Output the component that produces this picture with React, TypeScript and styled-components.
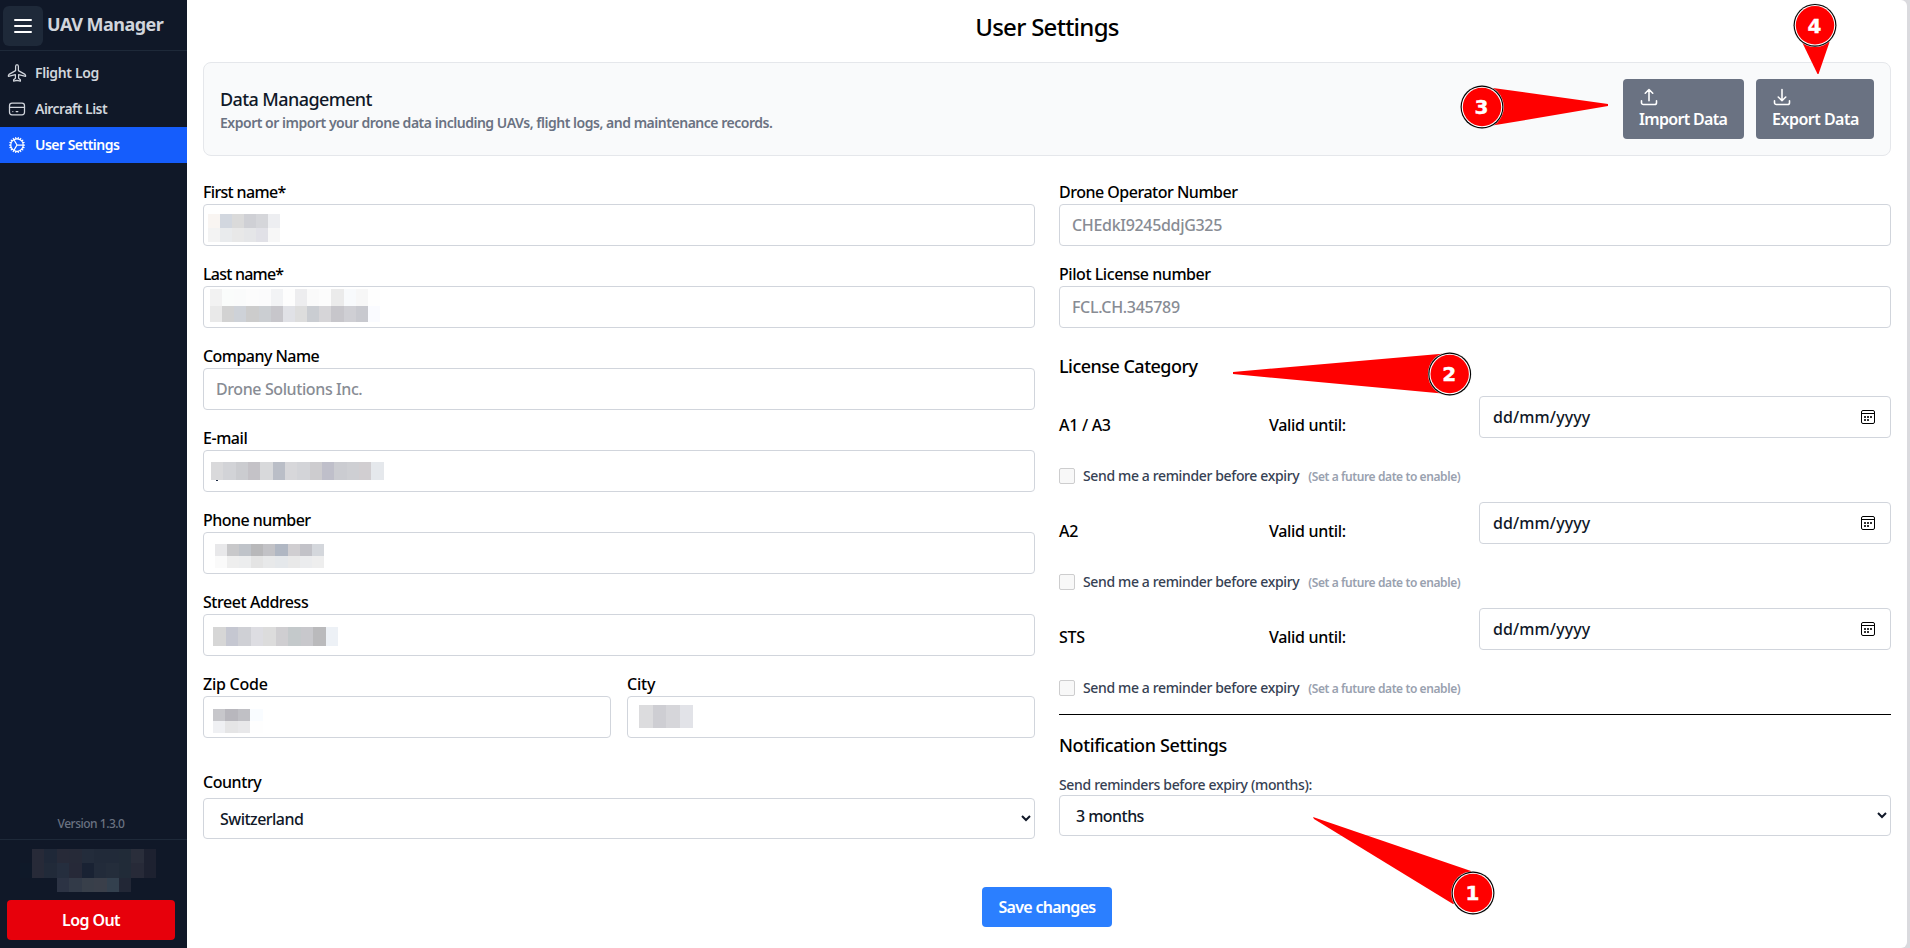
import React from "react";
import styled, { createGlobalStyle, css } from "styled-components";
import { TbCreditCard } from "react-icons/tb";
import { HiOutlineArrowDownTray, HiOutlineArrowUpTray, HiOutlineCog } from "react-icons/hi2";

const GlobalStyle = createGlobalStyle`
  *, *::before, *::after { box-sizing: border-box; }
  body {
    margin: 0;
    background: #fff;
    color: #000;
    font: 500 16px/24px "Noto Sans", "Open Sans", sans-serif;
  }
  h1, h2, p { margin: 0; font-weight: 500; }
  input, select, button { font: inherit; color: inherit; margin: 0; }
`;

type Tracked = { $track?: number };
const tracking = css<Tracked>`
  letter-spacing: ${({ $track = -0.028 }) => $track}em;
`;

const Page = styled.div`
  position: relative;
  display: flex;
  height: 948px;
  overflow: hidden;
  background: #dadade;
`;

const Sidebar = styled.aside`
  display: flex;
  flex-direction: column;
  flex: none;
  width: 187px;
  background: #101828;
  color: #d1d5dc;
`;

const Brand = styled.div`
  display: flex;
  align-items: center;
  gap: 4px;
  height: 51px;
  padding: 1px 3px 0;
  border-bottom: 1px solid #1e2939;
`;

const MenuButton = styled.button`
  display: grid;
  place-items: center;
  width: 40px;
  height: 40px;
  padding: 0;
  border: 0;
  border-radius: 6px;
  background: #1e2939;
  color: #fff;
`;

const BrandName = styled.span<Tracked>`
  font-size: 18px;
  font-weight: 700;
  line-height: 26px;
  padding-bottom: 4px;
  white-space: nowrap;
  ${tracking}
`;

const Nav = styled.nav`
  display: flex;
  flex-direction: column;
  padding-top: 4px;
`;

const NavItem = styled.a<Tracked & { $active?: boolean }>`
  display: flex;
  align-items: center;
  gap: 8px;
  height: 36px;
  padding: 0 7px;
  font-size: 14px;
  font-weight: 600;
  line-height: 20px;
  color: ${({ $active }) => ($active ? "#fff" : "#d1d5dc")};
  background: ${({ $active }) => ($active ? "#155dfc" : "transparent")};
  ${tracking}
`;

const SidebarFooter = styled.div`
  margin-top: auto;
`;

const Version = styled.div<Tracked>`
  width: 182px;
  padding-bottom: 7px;
  font-size: 12px;
  line-height: 16px;
  text-align: center;
  color: #6a7282;
  ${tracking}
`;

const Account = styled.div`
  display: flex;
  flex-direction: column;
  height: 109px;
  padding: 9px 12px 8px 7px;
  border-top: 1px solid #1e2939;
`;

const AccountName = styled.div`
  height: 51px;
`;

const LogOut = styled.button<Tracked>`
  height: 40px;
  border: 0;
  border-radius: 4px;
  background: #e7000b;
  color: #fff;
  font-weight: 600;
  ${tracking}
`;

const Main = styled.main`
  flex: 1;
  margin-right: 3px;
  padding: 11px 16px 0;
  background: #fff;
  border-radius: 0 6px 6px 0;
`;

const PageTitle = styled.h1<Tracked>`
  margin-bottom: 19px;
  font-size: 24px;
  line-height: 32px;
  text-align: center;
  ${tracking}
`;

const DataCard = styled.section`
  display: flex;
  align-items: center;
  justify-content: space-between;
  height: 94px;
  padding: 16px;
  border: 1px solid #e5e7eb;
  border-radius: 8px;
  background: #f9fafb;
`;

const Heading = styled.h2<Tracked & { $ink?: string }>`
  font-size: 18px;
  line-height: 28px;
  color: ${({ $ink = "#000" }) => $ink};
  ${tracking}
`;

const Description = styled.p<Tracked>`
  font-size: 14px;
  font-weight: 600;
  line-height: 20px;
  color: #6a7282;
  ${tracking}
`;

const Actions = styled.div`
  display: flex;
  gap: 12px;
`;

const DataButton = styled.button<Tracked & { $width: number }>`
  display: flex;
  flex-direction: column;
  align-items: flex-start;
  width: ${({ $width }) => $width}px;
  height: 60px;
  padding: 8px 16px;
  border: 0;
  border-radius: 4px;
  background: #6a7282;
  color: #fff;
  font-weight: 600;
  line-height: 24px;
  white-space: nowrap;
  ${tracking}
`;

const Columns = styled.div`
  display: grid;
  grid-template-columns: 1fr 1fr;
  gap: 24px;
  margin-top: 24px;
`;

const Column = styled.div`
  display: flex;
  flex-direction: column;
  gap: 16px;
`;

const Pair = styled.div`
  display: grid;
  grid-template-columns: 1fr 1fr;
  gap: 16px;
`;

const Field = styled.div<{ $top?: number }>`
  display: flex;
  flex-direction: column;
  padding-top: ${({ $top = 0 }) => $top}px;
`;

const Label = styled.label<Tracked & { $below?: number }>`
  margin-bottom: ${({ $below = 0 }) => $below}px;
  ${tracking}
`;

const control = css`
  width: 100%;
  border: 1px solid #d1d5dc;
  border-radius: 4px;
  background: #fff;
  color: #101828;
`;

const TextInput = styled.input<Tracked>`
  ${control}
  height: 42px;
  padding: 0 12px;
  outline: 0;
  ${tracking}
  &::placeholder { color: #888c94; opacity: 1; }
`;

const MaskedInput = styled.div`
  ${control}
  height: 42px;
  overflow: hidden;
`;

const Select = styled.select<Tracked>`
  ${control}
  height: 41px;
  padding: 0 0 0 12px;
  ${tracking}
`;

const MosaicBox = styled.div<{ $x: number; $y: number }>`
  padding: ${({ $y }) => $y}px 0 0 ${({ $x }) => $x}px;
`;

const MosaicRow = styled.div<{ $h: number; $indent?: number }>`
  display: flex;
  height: ${({ $h }) => $h}px;
  margin-left: ${({ $indent = 0 }) => $indent}px;
`;

const Cell = styled.span<{ $w: number; $tone: string }>`
  flex: none;
  width: ${({ $w }) => $w}px;
  background: ${({ $tone }) => $tone};
`;

const SectionTop = styled.div`
  padding-top: 8px;
`;

const LicenseGrid = styled.div`
  display: grid;
  grid-template-columns: repeat(4, 1fr);
  column-gap: 8px;
`;

const LicenseLabel = styled.span<Tracked>`
  padding-top: 17px;
  ${tracking}
`;

const DateField = styled.div<Tracked>`
  ${control}
  grid-column: span 2;
  display: flex;
  align-items: center;
  justify-content: space-between;
  height: 42px;
  padding: 0 15px 0 13px;
  ${tracking}
`;

const Reminder = styled.label<Tracked>`
  display: flex;
  align-items: center;
  height: 20px;
  margin-top: 28px;
  font-size: 14px;
  line-height: 20px;
  color: #364153;
  ${tracking}
`;

const Checkbox = styled.span`
  width: 16px;
  height: 16px;
  margin-right: 8px;
  border: 1px solid #cdcdce;
  border-radius: 2px;
  background: #f8f8f8;
`;

const Hint = styled.span<Tracked>`
  margin-left: 9px;
  padding-top: 1px;
  font-size: 12px;
  font-weight: 600;
  line-height: 16px;
  color: #99a1af;
  ${tracking}
`;

const Divider = styled.hr`
  width: 100%;
  height: 1px;
  margin: 0;
  border: 0;
  background: #000;
`;

const SmallLabel = styled.label<Tracked>`
  font-size: 14px;
  line-height: 20px;
  color: #364153;
  ${tracking}
`;

const SaveRow = styled.div`
  display: flex;
  justify-content: center;
  margin-top: 48px;
`;

const SaveButton = styled.button<Tracked>`
  width: 130px;
  height: 40px;
  padding: 0;
  border: 0;
  border-radius: 4px;
  background: #2b7fff;
  color: #fff;
  font-weight: 600;
  ${tracking}
`;

const CalloutLayer = styled.svg`
  position: absolute;
  inset: 0;
  pointer-events: none;
  text {
    font: 700 20px "DejaVu Sans", sans-serif;
    fill: #fff;
    stroke: #fff;
    stroke-width: 0.4px;
    text-anchor: middle;
  }
`;

type MosaicProps = {
  x: number;
  y: number;
  w: number;
  rows: { h: number; indent?: number; tones: string }[];
};

function Mosaic({ x, y, w, rows }: MosaicProps) {
  return (
    <MosaicBox $x={x} $y={y}>
      {rows.map((row, i) => (
        <MosaicRow key={i} $h={row.h} $indent={row.indent}>
          {row.tones.split(" ").map((tone, j) => (
            <Cell key={j} $w={w} $tone={`#${tone}`} />
          ))}
        </MosaicRow>
      ))}
    </MosaicBox>
  );
}

const MenuIcon = () => (
  <svg width="18" height="16" viewBox="0 0 18 16" stroke="currentColor" strokeWidth="2" strokeLinecap="round">
    <path d="M1 2h16M1 8h16M1 14h16" />
  </svg>
);

const PlaneIcon = () => (
  <svg width="20" height="20" viewBox="0 0 20 20" fill="none" stroke="currentColor" strokeWidth="1.25" strokeLinejoin="round">
    <path d="M10 1.6c-.9 0-1.4.9-1.4 2v4L2 11.4c-.4.3-.6.6-.6 1v.9l7-1.7v3.6l-1.8 1.5v1.4l3.4-.7 3.4.7v-1.4l-1.8-1.5v-3.6l7 1.7v-.9c0-.4-.2-.7-.6-1l-6.6-3.8v-4c0-1.1-.5-2-1.4-2z" />
  </svg>
);

const CalendarIcon = () => (
  <svg width="14" height="14" viewBox="0 0 14 14" fill="none" stroke="#000">
    <rect x=".5" y=".5" width="13" height="13" rx="1.5" />
    <path d="M1 3.5h12" />
    <path d="M3 7h2M6 7h2M9 7h2M3 10h2M6 10h2" strokeWidth="2" stroke="#333" />
  </svg>
);

const licenses = ["A1 / A3", "A2", "STS"];

const callouts = [
  { n: 1, x: 1473, y: 893, wedge: "1313,817 1314,819 1453,904 1473,893 1471,871" },
  { n: 2, x: 1449.7, y: 374, wedge: "1233,372 1233,374 1442,393.5 1450,374 1442,353.8" },
  { n: 3, x: 1482, y: 107, wedge: "1608,104 1608,106 1494,125.3 1482,107 1493,88" },
  { n: 4, x: 1815, y: 25.3, wedge: "1817.5,74 1818.5,74 1829.5,42 1815,25 1802,42" },
];

export default function App() {
  return (
    <Page>
      <GlobalStyle />
      <Sidebar>
        <Brand>
          <MenuButton aria-label="Menu"><MenuIcon /></MenuButton>
          <BrandName $track={-0.028}>UAV Manager</BrandName>
        </Brand>
        <Nav>
          <NavItem $track={-0.026}><PlaneIcon />Flight Log</NavItem>
          <NavItem $track={-0.037}><TbCreditCard size={20} strokeWidth={1.5} />Aircraft List</NavItem>
          <NavItem $track={-0.037} $active><HiOutlineCog size={20} />User Settings</NavItem>
        </Nav>
        <SidebarFooter>
          <Version $track={-0.041}>Version 1.3.0</Version>
          <Account>
            <AccountName>
              <Mosaic
                x={13}
                y={0}
                w={12.4}
                rows={[
                  { h: 14, indent: 12, tones: "272a38 1f2838 272a38 262a38 232c3b 212a39 212a39 212b38 2a2e3b 1d2130" },
                  { h: 15, indent: -0.4, tones: "0f1929 272a38 212a39 252e3e 262938 192233 222b3a 242d3b 212b38 272a38 1d2130" },
                  { h: 14, indent: 37, tones: "2c3344 323a48 383f4a 3a3f4a 33404e 222736" },
                ]}
              />
            </AccountName>
            <LogOut $track={-0.037}>Log Out</LogOut>
          </Account>
        </SidebarFooter>
      </Sidebar>

      <Main>
        <PageTitle $track={-0.03}>User Settings</PageTitle>
        <DataCard>
          <div>
            <Heading $track={-0.033} $ink="#101828">Data Management</Heading>
            <Description $track={-0.034}>
              Export or import your drone data including UAVs, flight logs, and maintenance records.
            </Description>
          </div>
          <Actions>
            <DataButton $width={121} $track={-0.042}>
              <HiOutlineArrowUpTray size={20} strokeWidth={1.9} />Import Data
            </DataButton>
            <DataButton $width={118} $track={-0.031}>
              <HiOutlineArrowDownTray size={20} strokeWidth={1.9} />Export Data
            </DataButton>
          </Actions>
        </DataCard>

        <Columns>
          <Column>
            <Field>
              <Label $track={-0.042}>First name*</Label>
              <MaskedInput>
                <Mosaic x={4} y={9} w={12} rows={[
                  { h: 14, tones: "f9f5f2 d2d7df dadada cfd0d5 d5d6da edeef1" },
                  { h: 14, tones: "f3f3f3 e9ebed e8e8e8 e5e6e8 e1e1e7 f7f7f7" },
                ]} />
              </MaskedInput>
            </Field>
            <Field>
              <Label $track={-0.048}>Last name*</Label>
              <MaskedInput>
                <Mosaic x={6} y={2} w={12.15} rows={[
                  { h: 17, tones: "f2f2f2 fafcfb fafbfb fcfcfc fbfbfc f2f3f5 fdfdfd ededef fafafa fcfcfc ebebeb f8fafc f7f7f7 fefefe" },
                  { h: 16, tones: "e9e9e9 d2d2d2 ced2d8 cccccc cbced2 c7c6cb e0e1e6 dddddd cacdd2 d6d5d8 c7c6cb cfcfd4 c8c9cf fafbff" },
                ]} />
              </MaskedInput>
            </Field>
            <Field>
              <Label $track={-0.034}>Company Name</Label>
              <TextInput $track={-0.025} placeholder="Drone Solutions Inc." />
            </Field>
            <Field>
              <Label>E-mail</Label>
              <MaskedInput>
                <Mosaic x={7} y={11} w={12.35} rows={[
                  { h: 18, tones: "d9d9db d2d3d7 cbccd0 c4c2c7 d8d9db babec7 d7d7da d3d4d8 cdcccf bfbfca cbccd1 cecfd3 d1ced1 e5e8ec" },
                ]} />
                <Mosaic x={12} y={0} w={2} rows={[{ h: 1, tones: "1d2b45" }]} />
              </MaskedInput>
            </Field>
            <Field>
              <Label $track={-0.034}>Phone number</Label>
              <MaskedInput>
                <Mosaic x={11} y={11} w={12.1} rows={[
                  { h: 12, tones: "e8e8ea c8c8ca bfc3c9 b8b8ba c2c2c6 b0b7c3 d0ced1 c2c2c8 d4d7dc" },
                  { h: 12, tones: "fafafa eeeeee ecedee e4e4e4 e8e9ea e5e8eb e9e9e9 ebecee eeeeee" },
                ]} />
              </MaskedInput>
            </Field>
            <Field>
              <Label>Street Address</Label>
              <MaskedInput>
                <Mosaic x={9} y={12} w={12.5} rows={[
                  { h: 19, tones: "d6d6d6 c5c7d1 cfd0d5 dddde2 dcdcdc cfced1 c4c9cb c8c8cc bababc edf1f6" },
                ]} />
              </MaskedInput>
            </Field>
            <Pair>
              <Field>
                <Label $track={-0.016}>Zip Code</Label>
                <MaskedInput>
                  <Mosaic x={9} y={12} w={12.4} rows={[
                    { h: 12, tones: "c7c7cb b8b7bd c0c0c5 f9fcff" },
                    { h: 12, tones: "eff0f3 e5e5e6 e8e8ea fefefe" },
                  ]} />
                </MaskedInput>
              </Field>
              <Field>
                <Label $track={-0.015}>City</Label>
                <MaskedInput>
                  <Mosaic x={11} y={8} w={13.5} rows={[{ h: 23, tones: "dcdcde ceced3 d6d6da e2e3e8" }]} />
                </MaskedInput>
              </Field>
            </Pair>
            <Field $top={16}>
              <Label $below={4}>Country</Label>
              <Select $track={-0.033}><option>Switzerland</option></Select>
            </Field>
          </Column>

          <Column>
            <Field>
              <Label $track={-0.031}>Drone Operator Number</Label>
              <TextInput $track={-0.02} placeholder="CHEdkI9245ddjG325" />
            </Field>
            <Field>
              <Label>Pilot License number</Label>
              <TextInput $track={-0.021} placeholder="FCL.CH.345789" />
            </Field>
            <SectionTop>
              <Heading $track={-0.0293}>License Category</Heading>
            </SectionTop>
            {licenses.map((name) => (
              <div key={name}>
                <LicenseGrid>
                  <LicenseLabel $track={-0.018}>{name}</LicenseLabel>
                  <LicenseLabel $track={-0.02}>Valid until:</LicenseLabel>
                  <DateField $track={0.007}>dd/mm/yyyy<CalendarIcon /></DateField>
                </LicenseGrid>
                <Reminder $track={-0.026}>
                  <Checkbox />
                  Send me a reminder before expiry
                  <Hint $track={-0.034}>(Set a future date to enable)</Hint>
                </Reminder>
              </div>
            ))}
            <Divider />
            <Heading $track={-0.021}>Notification Settings</Heading>
            <Field>
              <SmallLabel $track={-0.0242}>Send reminders before expiry (months):</SmallLabel>
              <Select $track={-0.034}><option>3 months</option></Select>
            </Field>
          </Column>
        </Columns>

        <SaveRow>
          <SaveButton $track={-0.044}>Save changes</SaveButton>
        </SaveRow>
      </Main>

      <CalloutLayer width="1910" height="948" viewBox="0 0 1910 948">
        {callouts.map(({ n, x, y, wedge }) => (
          <g key={n}>
            <polygon points={wedge} fill="#f00" />
            <circle cx={x} cy={y} r="21.8" fill="#ddd" />
            <circle cx={x} cy={y} r="21.4" fill="#000" />
            <circle cx={x} cy={y} r="20.3" fill="#fff" />
            <circle cx={x} cy={y} r="19.2" fill="#f00" />
            <text x={x - 0.5} y={y + 7.3}>{n}</text>
          </g>
        ))}
      </CalloutLayer>
    </Page>
  );
}
